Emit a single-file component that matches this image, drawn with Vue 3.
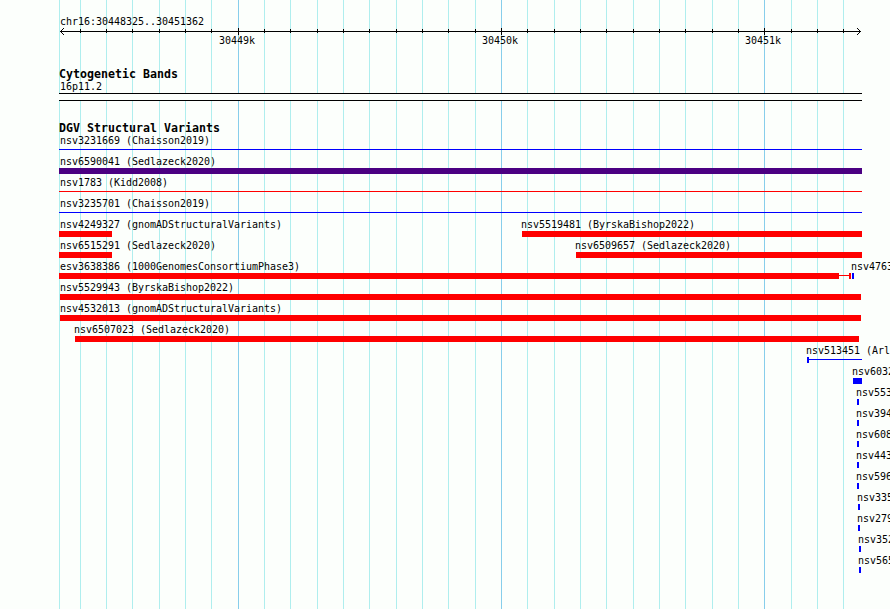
<script setup>
const gridLines = [59, 80, 106, 132, 159, 185, 211, 238, 264, 290, 317, 343, 369, 396, 422, 448, 475, 501, 527, 554, 580, 606, 633, 659, 685, 712, 738, 764, 791, 817, 843]
const majors = [238, 501, 764]
const ticks = gridLines.slice(1)
const scaleLabels = [
  { x: 219, text: '30449k' },
  { x: 482, text: '30450k' },
  { x: 745, text: '30451k' },
]

const box = (from, to, color = 'red') => ({ from, to, color, kind: 'box' })
const line = (from, to, color) => ({ from, to, color, kind: 'line' })

const rows = [
  { labels: [[60, 'nsv3231669 (Chaisson2019)']], marks: [line(59, 862, 'blue')] },
  { labels: [[60, 'nsv6590041 (Sedlazeck2020)']], marks: [box(59, 862, 'indigo')] },
  { labels: [[60, 'nsv1783 (Kidd2008)']], marks: [line(59, 862, 'red')] },
  { labels: [[60, 'nsv3235701 (Chaisson2019)']], marks: [line(59, 862, 'blue')] },
  {
    labels: [[60, 'nsv4249327 (gnomADStructuralVariants)'], [521, 'nsv5519481 (ByrskaBishop2022)']],
    marks: [box(59, 112), box(522, 862)],
  },
  {
    labels: [[60, 'nsv6515291 (Sedlazeck2020)'], [575, 'nsv6509657 (Sedlazeck2020)']],
    marks: [box(59, 112), box(576, 862)],
  },
  {
    labels: [[60, 'esv3638386 (1000GenomesConsortiumPhase3)'], [851, 'nsv4763']],
    marks: [box(59, 839), line(839, 849, 'red'), box(849, 851), box(852, 854, 'blue')],
  },
  { labels: [[60, 'nsv5529943 (ByrskaBishop2022)']], marks: [box(60, 861)] },
  { labels: [[60, 'nsv4532013 (gnomADStructuralVariants)']], marks: [box(60, 861)] },
  { labels: [[74, 'nsv6507023 (Sedlazeck2020)']], marks: [box(75, 859)] },
  { labels: [[806, 'nsv513451 (Arl']], marks: [box(807, 809, 'blue'), line(809, 862, 'blue')] },
  { labels: [[852, 'nsv6032']], marks: [box(853, 862, 'blue')] },
  { labels: [[856, 'nsv553']], marks: [box(857, 859, 'blue')] },
  { labels: [[856, 'nsv394']], marks: [box(857, 859, 'blue')] },
  { labels: [[856, 'nsv608']], marks: [box(857, 859, 'blue')] },
  { labels: [[856, 'nsv443']], marks: [box(857, 859, 'blue')] },
  { labels: [[856, 'nsv596']], marks: [box(857, 859, 'blue')] },
  { labels: [[857, 'nsv335']], marks: [box(858, 860, 'blue')] },
  { labels: [[857, 'nsv279']], marks: [box(858, 860, 'blue')] },
  { labels: [[858, 'nsv352']], marks: [box(859, 861, 'blue')] },
  { labels: [[858, 'nsv565']], marks: [box(859, 861, 'blue')] },
]
</script>

<template>
  <main class="browser">
    <svg class="grid" width="890" height="609" shape-rendering="crispEdges" aria-hidden="true">
      <rect v-for="x in gridLines" :key="x" :x="x" y="0" width="1" height="609" :class="{ major: majors.includes(x) }" />
    </svg>

    <header class="ruler">
      <div class="region">chr16:30448325..30451362</div>
      <svg class="axis" width="890" height="9" shape-rendering="crispEdges" aria-hidden="true">
        <rect x="60" y="4" width="801" height="1" />
        <rect v-for="x in ticks" :key="x" :x="x" :y="majors.includes(x) ? 1 : 2" width="1" :height="majors.includes(x) ? 7 : 4" />
        <path d="M61 3h1v1h-1zM62 2h1v1h-1zM63 1h1v1h-1zM61 5h1v1h-1zM62 6h1v1h-1zM63 7h1v1h-1z" />
        <path d="M859 3h1v1h-1zM858 2h1v1h-1zM857 1h1v1h-1zM859 5h1v1h-1zM858 6h1v1h-1zM857 7h1v1h-1z" />
      </svg>
      <div class="scale">
        <span v-for="l in scaleLabels" :key="l.x" class="label" :style="{ left: l.x + 'px' }">{{ l.text }}</span>
      </div>
    </header>

    <section class="cytobands">
      <h2>Cytogenetic Bands</h2>
      <div class="band-name">16p11.2</div>
      <div class="band"></div>
    </section>

    <section class="variants">
      <h2>DGV Structural Variants</h2>
      <div v-for="(row, i) in rows" :key="i" class="row">
        <span v-for="l in row.labels" :key="l[1]" class="label" :style="{ left: l[0] + 'px' }">{{ l[1] }}</span>
        <i v-for="(m, j) in row.marks" :key="j" class="mark" :class="[m.kind, m.color]" :style="{ left: m.from + 'px', width: m.to - m.from + 'px' }"></i>
      </div>
    </section>
  </main>
</template>

<style>
body { background: #fcfffc; }
</style>

<style scoped>
.browser {
  position: relative;
  width: 890px;
  height: 609px;
  overflow: hidden;
  background: #fcfffc;
  color: #000;
  font: 10px/12px "DejaVu Sans Mono", "Liberation Mono", monospace;
  letter-spacing: -0.02px;
  white-space: pre;
}
.grid { position: absolute; inset: 0; fill: #afeeee; }
.grid .major { fill: #87ceeb; }
.ruler, .cytobands, .variants { position: relative; }
.ruler { box-sizing: border-box; padding-top: 16px; height: 68px; }
.region { padding-left: 60px; height: 11px; }
.axis { display: block; }
.scale { position: relative; height: 12px; margin-top: -1px; }
h2 {
  margin: 0;
  padding-left: 59px;
  height: 13px;
  font-size: 11.6px;
  line-height: 13px;
  font-weight: bold;
  letter-spacing: 0.016px;
}
.band-name { padding-left: 60px; }
.cytobands { height: 54px; }
.band {
  margin-left: 59px;
  width: 803px;
  height: 8px;
  box-sizing: border-box;
  border: solid #000;
  border-width: 1px 0;
  background: #fcfffc;
}
.row { position: relative; height: 21px; }
.label { position: absolute; top: 0; }
.mark { position: absolute; }
.box { top: 12px; height: 6px; }
.line { top: 14px; height: 1px; }
.red { background: #f00; }
.blue { background: #00f; }
.indigo { background: #4b0082; }
</style>
